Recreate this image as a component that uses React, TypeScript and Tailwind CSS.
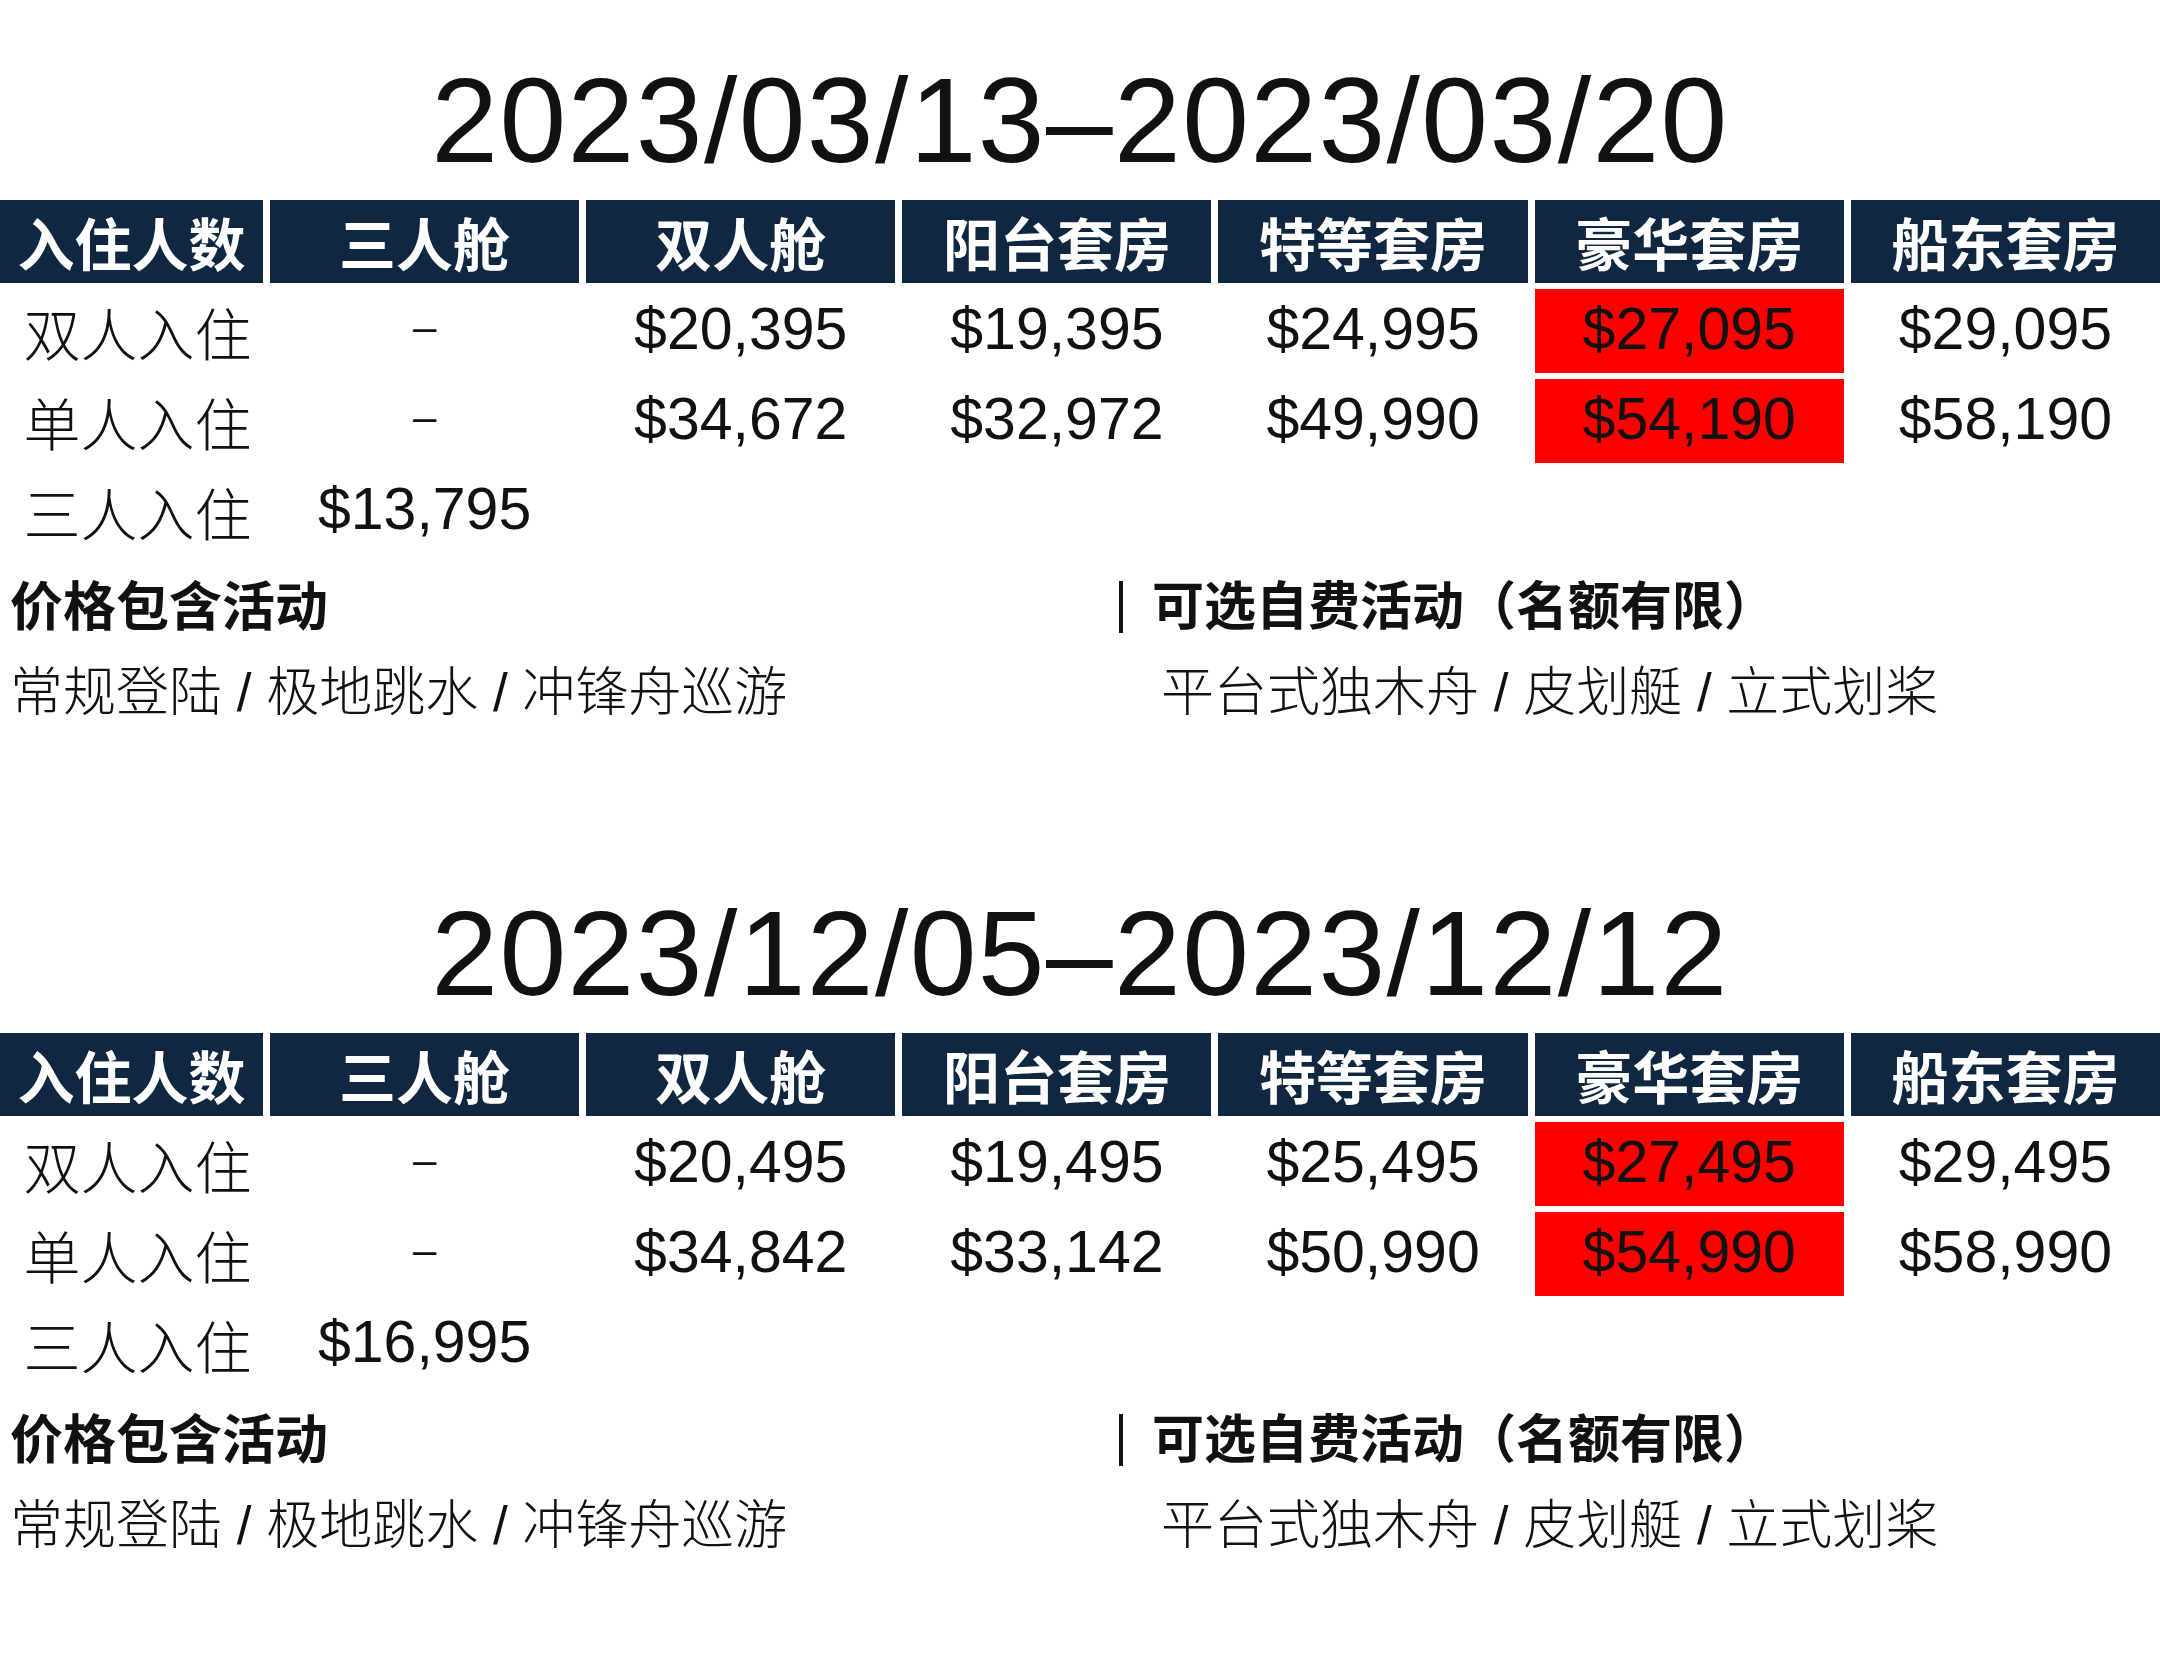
import React from "react";

type Section = {
  title: string;
  double: string[];
  single: string[];
  triple: string;
};

const sections: Section[] = [
  {
    title: "2023/03/13–2023/03/20",
    double: ["-", "$20,395", "$19,395", "$24,995", "$27,095", "$29,095"],
    single: ["-", "$34,672", "$32,972", "$49,990", "$54,190", "$58,190"],
    triple: "$13,795",
  },
  {
    title: "2023/12/05–2023/12/12",
    double: ["-", "$20,495", "$19,495", "$25,495", "$27,495", "$29,495"],
    single: ["-", "$34,842", "$33,142", "$50,990", "$54,990", "$58,990"],
    triple: "$16,995",
  },
];

const headers = ["入住人数", "三人舱", "双人舱", "阳台套房", "特等套房", "豪华套房", "船东套房"];

const FONT = "font-['Liberation_Sans','Noto_Sans_CJK_SC',sans-serif]";

function HeaderCell({ text }: { text: string }) {
  return (
    <div className="h-[83px] bg-[#0f2740] flex items-center justify-center text-white font-bold text-[57px] leading-none font-['Noto_Sans_CJK_SC',sans-serif]">
      {text}
    </div>
  );
}

function LabelCell({ text }: { text: string }) {
  return (
    <div className="h-[84px] flex items-center justify-center text-[#111] text-[57px] leading-none font-light font-['Noto_Sans_CJK_SC',sans-serif] pl-[12px]">
      {text}
    </div>
  );
}

function ValueCell({ text, red }: { text: string; red?: boolean }) {
  if (text === "-") {
    return (
      <div className="h-[84px] flex items-center justify-center text-[#111] text-[42px] leading-none font-['Liberation_Sans',sans-serif] pb-[8px]">
        –
      </div>
    );
  }
  return (
    <div
      className={`h-[84px] flex items-center justify-center text-[#111] text-[59px] leading-none font-['Liberation_Sans',sans-serif] pb-[4px] ${
        red ? "bg-[#ff0000]" : ""
      }`}
    >
      {text}
    </div>
  );
}

function PriceSection({ s }: { s: Section }) {
  return (
    <div className="h-[833px] flex flex-col">
      <div className="h-[200px] pt-[40px] flex items-center justify-center">
        <div className="text-[120px] leading-none tracking-[1.4px] text-[#111] font-['Liberation_Sans',sans-serif]">
          {s.title}
        </div>
      </div>
      <div className="grid grid-cols-[263px_repeat(6,1fr)] gap-x-[7px] gap-y-[6px]">
        {headers.map((h) => (
          <HeaderCell key={h} text={h} />
        ))}
        <LabelCell text="双人入住" />
        {s.double.map((v, i) => (
          <ValueCell key={"d" + i} text={v} red={i === 4} />
        ))}
        <LabelCell text="单人入住" />
        {s.single.map((v, i) => (
          <ValueCell key={"s" + i} text={v} red={i === 4} />
        ))}
        <LabelCell text="三人入住" />
        <ValueCell text={s.triple} />
      </div>
      <div className={`grid grid-cols-[1119px_1fr] mt-[24px] text-[#111] ${FONT}`}>
        <div className="pl-[10px] flex flex-col gap-[25px]">
          <div className="h-[60px] flex items-center text-[53px] leading-none font-bold">价格包含活动</div>
          <div className="h-[60px] flex items-center text-[53px] leading-none font-light">
            常规登陆 / 极地跳水 / 冲锋舟巡游
          </div>
        </div>
        <div className="flex flex-col gap-[25px]">
          <div className="h-[60px] flex items-center text-[52px] leading-none font-bold">
            <span className="w-[4px] h-[52px] bg-[#111] mr-[29px]" />
            可选自费活动（名额有限）
          </div>
          <div className="h-[60px] flex items-center text-[53px] leading-none font-light pl-[42px]">
            平台式独木舟 / 皮划艇 / 立式划桨
          </div>
        </div>
      </div>
    </div>
  );
}

export default function App() {
  return (
    <div className="w-[2160px] h-[1665px] bg-white overflow-hidden">
      {sections.map((s) => (
        <PriceSection key={s.title} s={s} />
      ))}
    </div>
  );
}
